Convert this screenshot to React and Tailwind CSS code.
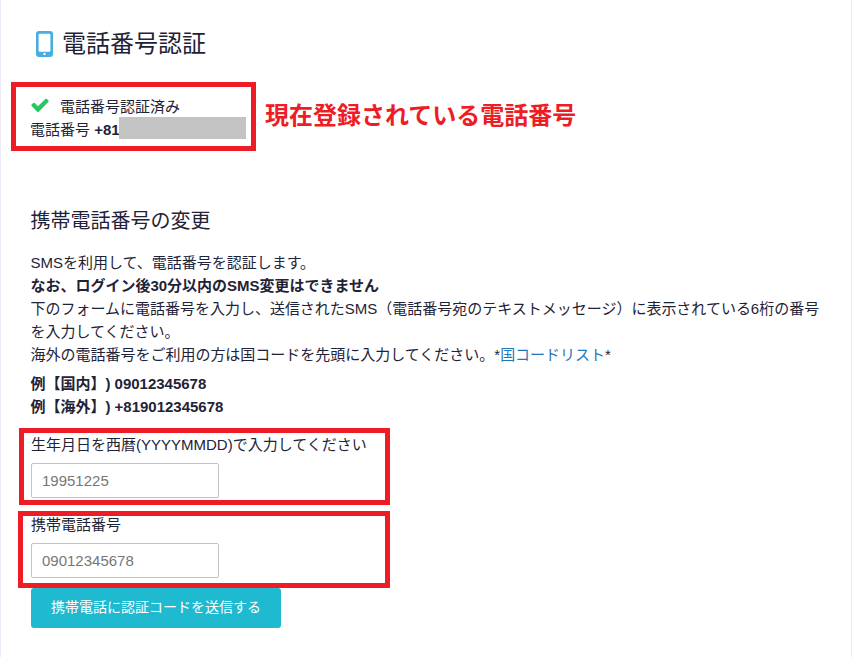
import React from "react";

function MobileIcon() {
  return (
    <svg width="17" height="26" viewBox="0 0 17 26" className="shrink-0">
      <rect width="17" height="26" rx="3" fill="#48aee2" />
      <rect x="2.6" y="2.8" width="11.8" height="18" rx="1.3" fill="#fff" />
      <circle cx="8.5" cy="22.9" r="1.2" fill="#fff" />
    </svg>
  );
}

function CheckIcon() {
  return (
    <svg viewBox="0 0 1792 1792" className="-mt-[3px] mr-[10px] h-[20px] w-[20px] shrink-0" fill="#28c565">
      <path d="M1671 566q0 40-28 68l-724 724-136 136q-28 28-68 28t-68-28l-136-136-362-362q-28-28-28-68t28-68l136-136q28-28 68-28t68 28l294 295 656-657q28-28 68-28t68 28l136 136q28 28 28 68z" />
    </svg>
  );
}

function Field({ label, placeholder, className, labelClass }) {
  return (
    <div className={className}>
      <label className={labelClass}>{label}</label>
      <input
        type="text"
        placeholder={placeholder}
        className="mt-[7px] block h-[35px] w-[188px] rounded-[2px] border border-[#c2c2c2] bg-white px-[10px] text-[15px] placeholder:text-[#777]"
      />
    </div>
  );
}

export default function App() {
  return (
    <div
      lang="ja"
      className="h-[657px] w-[852px] overflow-hidden border-x border-[#e9ebf7] bg-white font-['Liberation_Sans','Noto_Sans_CJK_JP',sans-serif] text-[15px] leading-[23px] text-[#1f2338] [text-spacing-trim:space-all]"
    >
      <h1 className="flex h-[82px] items-center gap-[9px] pl-[35px] pt-[6px] text-[24px] leading-[36px]">
        <MobileIcon />
        <span>電話番号認証</span>
      </h1>

      <div className="flex items-center">
        <div className="ml-[10px] h-[69px] w-[245px] border-[5px] border-[#ee1c25] pl-[14px] pt-[8px]">
          <p className="flex items-center">
            <CheckIcon />
            電話番号認証済み
          </p>
          <p className="flex">
            電話番号&nbsp;<strong className="w-[25px]">+81</strong>
            <span className="-mt-px ml-[-0.5px] h-[22px] w-[127px] shrink-0 bg-[#c3c3c3]" />
          </p>
        </div>
        <p className="-mt-px ml-[9px] text-[24px] font-bold leading-[36px] text-[#ee1c25]">
          現在登録されている電話番号
        </p>
      </div>

      <div className="pl-[29.5px] pr-[30px] tracking-[-0.01px]">
        <h2 className="mt-[55px] text-[20px] leading-[30px]">携帯電話番号の変更</h2>
        <p className="mt-[15px] whitespace-nowrap">
          SMSを利用して、電話番号を認証します。
          <br />
          <strong>なお、ログイン後30分以内のSMS変更はできません</strong>
          <br />
          下のフォームに電話番号を入力し、送信されたSMS（電話番号宛のテキストメッセージ）に表示されている6桁の番号
          <br />
          を入力してください。
          <br />
          海外の電話番号をご利用の方は国コードを先頭に入力してください。*
          <a href="#" className="text-[#1f78b8]">国コードリスト</a>*
        </p>
        <p className="mt-[6px] font-bold">
          例【国内】) 09012345678
          <br />
          例【海外】) +819012345678
        </p>
      </div>

      <Field
        label="生年月日を西暦(YYYYMMDD)で入力してください"
        placeholder="19951225"
        className="ml-[18px] mt-[10px] h-[77px] w-[371px] border-[5px] border-[#ee1c25] pl-[7px]"
        labelClass="block"
      />
      <Field
        label="携帯電話番号"
        placeholder="09012345678"
        className="ml-[17px] mt-[6px] h-[77px] w-[372px] border-[5px] border-[#ee1c25] pl-[8px]"
        labelClass="-mt-[3px] block"
      />

      <button className="ml-[30px] block h-[40px] w-[250px] rounded-[3px] bg-[#1fbad0] pb-[2px] text-[14px] text-white">
        携帯電話に認証コードを送信する
      </button>
    </div>
  );
}
